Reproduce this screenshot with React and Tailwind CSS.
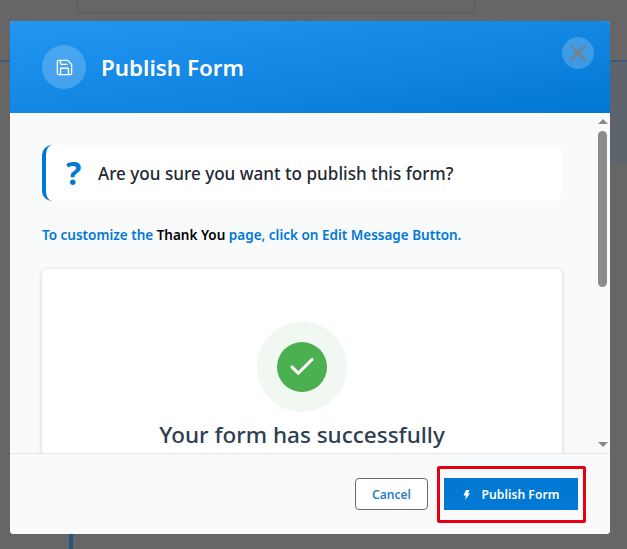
import React from "react";
import { Save, X, Check } from "lucide-react";

export default function App() {
  const font = { fontFamily: '"Noto Sans", "Open Sans", sans-serif' };
  return (
    <div className="relative h-[549px] w-[627px] overflow-hidden bg-[#666666]" style={font}>
      {/* dimmed page behind the dialog */}
      <div className="absolute left-[76px] top-[-20px] h-[34px] w-[400px] rounded border-2 border-[#5f5f5f]" />
      <div className="absolute left-0 top-[60px] h-[2px] w-[627px] bg-[#3d5a78]" />
      <div className="absolute left-[610px] top-[62px] h-[100px] w-[17px] bg-[#5d646c]" />
      <div className="absolute left-[69px] top-[534px] h-[15px] w-[4px] bg-[#24567f]" />

      {/* dialog */}
      <div className="absolute left-[10px] top-[21px] flex h-[513px] w-[600px] flex-col overflow-hidden rounded-[4px] bg-[#f8fafc]">
        <header className="flex h-[92px] shrink-0 items-center justify-between bg-gradient-to-br from-[#2196f3] to-[#0078d4] pl-[32px] pr-[16px]">
          <div className="flex items-center gap-[16px]">
            <div className="flex h-[44px] w-[44px] items-center justify-center rounded-full bg-white/20">
              <Save size={19} strokeWidth={1.7} className="text-white" />
            </div>
            <h2 className="ml-[-1px] mt-[2px] text-[22.4px] font-semibold leading-none text-white">Publish Form</h2>
          </div>
          <button className="mb-[28px] flex h-[32px] w-[32px] items-center justify-center rounded-full bg-white/20">
            <X size={26} strokeWidth={2.4} className="text-[#7a8088]" />
          </button>
        </header>

        <div className="relative h-[340px] shrink-0 overflow-hidden bg-[#f8fafc] pl-[32px] pr-[48px] pt-[32px]">
          <div className="flex h-[56px] items-center rounded-[10px] border-l-[4px] border-[#0078d4] bg-white pl-[20px]">
            <span className="w-[32px] text-[32px] font-bold leading-none text-[#0078d4]">?</span>
            <p className="mt-[1px] text-[17.1px] font-medium text-[#1f2933]">Are you sure you want to publish this form?</p>
          </div>
          <p className="mt-[24px] text-[13.5px] font-semibold leading-[20px] text-[#0078d4]">
            To customize the <span className="text-black">Thank You</span> page, click on Edit Message Button.
          </p>
          <div className="mt-[24px] flex h-[300px] flex-col items-center rounded-[6px] bg-white pt-[53px] shadow-[0_1px_4px_rgba(0,0,0,0.18)]">
            <div className="flex h-[90px] w-[90px] items-center justify-center rounded-full bg-[#f1f8f1]">
              <div className="flex h-[50px] w-[50px] items-center justify-center rounded-full bg-[#4caf50]">
                <Check size={30} strokeWidth={2.5} className="text-white" />
              </div>
            </div>
            <h3 className="mt-[7px] text-[22.5px] font-medium leading-[32px] text-[#2d3e50]">Your form has successfully</h3>
          </div>

          {/* scrollbar */}
          <div className="absolute bottom-0 right-[3px] top-0 flex w-[9px] flex-col items-center">
            <div className="mt-[6px] h-0 w-0 border-x-[5px] border-b-[5px] border-x-transparent border-b-[#8a8a8a]" />
            <div className="mt-[7px] h-[156px] w-[9px] rounded-full bg-[#8c8c8c]" />
            <div className="absolute bottom-[6px] h-0 w-0 border-x-[5px] border-t-[5px] border-x-transparent border-t-[#8a8a8a]" />
          </div>
        </div>

        <footer className="flex flex-1 items-center justify-end gap-[16px] border-t border-[#e2e5e9] bg-[#f8fafc] pr-[32px]">
          <button className="flex h-[32px] w-[73px] items-center justify-center rounded-[4px] border border-[#6b6b6b] bg-white pt-[1px] text-[12px] font-semibold text-[#2a7fc4]">
            Cancel
          </button>
          <button className="flex h-[32px] w-[134px] items-center justify-center gap-[12px] bg-[#0078d4] pt-[2px] text-[12.2px] font-semibold text-white">
            <svg width="7" height="10" viewBox="0 0 7 10" fill="currentColor">
              <path d="M3 0h3.5L5 3.5h2L2 10l1-4.5H0.5z" />
            </svg>
            Publish Form
          </button>
        </footer>
      </div>

      {/* red annotation rectangle */}
      <div className="absolute left-[437px] top-[466px] h-[57px] w-[149px] rounded-[2px] border-[3px] border-[#e60012]" />
    </div>
  );
}
